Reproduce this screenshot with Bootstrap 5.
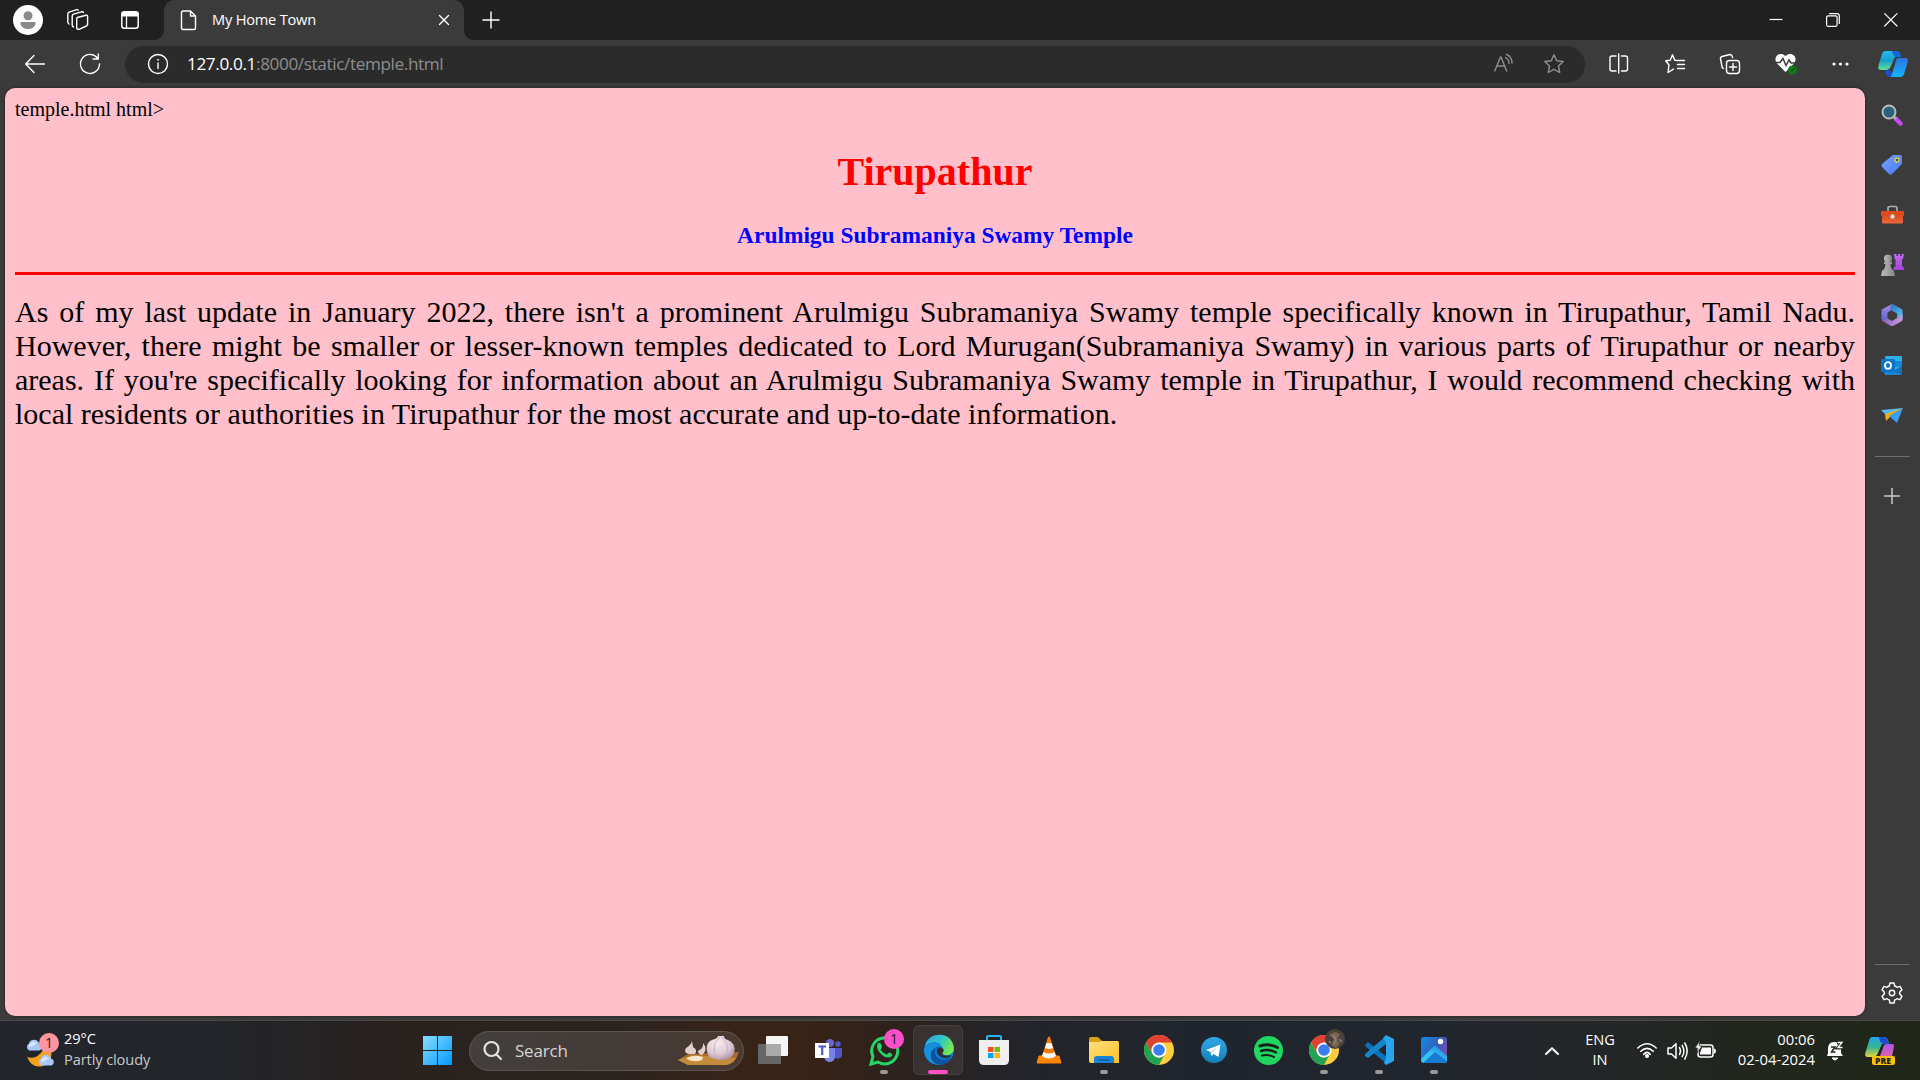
<!DOCTYPE html>
<html lang="en">
<head>
<meta charset="utf-8">
<meta name="viewport" content="width=device-width, initial-scale=1">
<title>My Home Town</title>
<link href="https://cdn.jsdelivr.net/npm/bootstrap@5.3.0/dist/css/bootstrap.min.css" rel="stylesheet">
<style>
html,body{height:100%}
body{width:1920px;height:1080px;overflow:hidden;background:#3b3b3b;color:#fff;font-family:"Open Sans","Noto Sans",sans-serif;font-size:14.6px;line-height:20px}
svg{display:block;flex:none;overflow:visible}
.ln{fill:none;stroke:#fff;stroke-width:1.4;stroke-linecap:round;stroke-linejoin:round}
.dim{stroke:#8f8f8f}
.slot{flex:none;display:flex;align-items:center;justify-content:center}
.tabstrip{height:40px;background:#202020}
.tab-active{width:300px;height:40px;background:#3b3b3b;border-radius:10px 10px 0 0;position:relative;padding:0 10px 0 14px}
.tab-active::before,.tab-active::after{content:"";position:absolute;bottom:0;width:10px;height:10px}
.tab-active::before{left:-10px;background:radial-gradient(circle at 0 0,transparent 9.5px,#3b3b3b 10.5px)}
.tab-active::after{right:-10px;background:radial-gradient(circle at 100% 0,transparent 9.5px,#3b3b3b 10.5px)}
.tab-name{margin-left:14px;padding-bottom:2px;letter-spacing:-.2px}
.toolbar{height:48px}
.address{width:1460px;height:37px;background:#2b2b2b;border-radius:19px;margin-left:15px;margin-right:6.5px;font-size:17.2px;letter-spacing:-.39px;color:#8e8e8e}
.address b{font-weight:400;color:#fff}
.viewer{height:932px}
.doc{width:1860px;height:928px;margin-left:5px;background:#ffc0cb;border-radius:10px;padding:10px;color:#000;font-family:"Liberation Serif",serif;font-size:20px;line-height:23px;box-shadow:0 0 3px #1d1d1d}
.doc h1{font-size:40px;font-weight:700;line-height:46px;margin:28px 0 0;color:red}
.doc h3{font-size:23.4px;font-weight:700;line-height:27px;margin:27px 0 0;color:blue}
.doc hr{height:3px;border:0;background:red;opacity:1;margin:23px 0 0}
.doc p{font-size:30px;line-height:34px;text-align:justify;margin:20px 0 0}
.side{width:54px;padding-top:2px}
.side .slot{height:50px}
.side-rule{width:35px;height:1px;background:#707070;margin:0 auto}
.taskbar{height:60px;border-top:1px solid #4b4946;background:linear-gradient(90deg,#22252b 0,#22252a 210px,#29221f 400px,#2b231f 620px,#382318 730px,#382316 810px,#2c221e 900px,#24242a 1000px,#20252d 1200px,#20252e 1400px,#24262b 1530px,#22261f 1740px,#20271a 1880px)}
.tray-text{padding-bottom:3px}
.finder{width:275px;height:40px;border:1px solid #5c5653;border-radius:20px;background:linear-gradient(90deg,#433f3d,#443a36 70%,#4c3a30);font-size:17px;color:#d6d3d1;margin-left:9px;margin-right:2px;padding:0 3px 0 13px}
.app{width:55px;height:59px;position:relative;padding-bottom:1px}
.app.on::after{content:"";position:absolute;left:24px;top:49px;width:8px;height:4px;border-radius:2px;background:#9b9896}
.app.focus-app::before{content:"";position:absolute;left:2px;top:4px;width:50px;height:50px;border:1px solid #46403f;border-radius:6px;background:#393232}
.app.focus-app::after{left:17px;width:20px;background:#ff4fc8}
.app svg{position:relative}
.count{position:absolute;width:20px;height:20px;border-radius:50%;background:#ff4fc8;color:#1c1c1c;font-size:14px;line-height:20px;text-align:center}
</style>
<script src="https://cdn.jsdelivr.net/npm/bootstrap@5.3.0/dist/js/bootstrap.bundle.min.js"></script>
</head>
<body>
<svg width="0" height="0" class="position-absolute">
<defs>
<linearGradient id="gCy" x1="0" y1="0" x2="0" y2="1"><stop offset="0" stop-color="#28b8ee"/><stop offset=".5" stop-color="#189fc8"/><stop offset="1" stop-color="#62df9a"/></linearGradient>
<linearGradient id="gBl" x1="0" y1="0" x2="0" y2="1"><stop offset="0" stop-color="#2c74e5"/><stop offset="1" stop-color="#18b4fb"/></linearGradient>
<linearGradient id="gPre" x1="0" y1="0" x2="0" y2="1"><stop offset="0" stop-color="#22a7ee"/><stop offset=".5" stop-color="#32b493"/><stop offset="1" stop-color="#ecd43c"/></linearGradient>
<linearGradient id="gPk" x1="0" y1="0" x2="0" y2="1"><stop offset="0" stop-color="#a855ef"/><stop offset="1" stop-color="#f46a8e"/></linearGradient>
<linearGradient id="gWin" gradientUnits="userSpaceOnUse" x1="0" y1="0" x2="29" y2="29"><stop offset="0" stop-color="#85dfff"/><stop offset="1" stop-color="#0797fb"/></linearGradient>
<linearGradient id="gTag" x1="0" y1="0" x2="1" y2="1"><stop offset="0" stop-color="#78a5ff"/><stop offset="1" stop-color="#4776f0"/></linearGradient>
<linearGradient id="gBox" x1="0" y1="0" x2="0" y2="1"><stop offset="0" stop-color="#d14a1c"/><stop offset="1" stop-color="#f0673f"/></linearGradient>
<linearGradient id="gEdge" x1="0" y1="0" x2="1" y2=".4"><stop offset="0" stop-color="#26a8e5"/><stop offset=".6" stop-color="#35c6c4"/><stop offset="1" stop-color="#72ea52"/></linearGradient>
<linearGradient id="gFold" x1="0" y1="0" x2="1" y2="1"><stop offset="0" stop-color="#ffe082"/><stop offset="1" stop-color="#fcc123"/></linearGradient>
<linearGradient id="gTel" x1="0" y1="0" x2="0" y2="1"><stop offset="0" stop-color="#31a9e4"/><stop offset="1" stop-color="#127fb9"/></linearGradient>
<linearGradient id="gPho" x1="0" y1="0" x2="1" y2=".5"><stop offset="0" stop-color="#168ce0"/><stop offset=".6" stop-color="#315fc0"/><stop offset="1" stop-color="#7c4bb2"/></linearGradient>
<linearGradient id="gMt" x1="0" y1="1" x2="1" y2="0"><stop offset="0" stop-color="#36c9f6"/><stop offset=".5" stop-color="#35bff2"/><stop offset="1" stop-color="#1679d0"/></linearGradient>
<linearGradient id="gChs" x1="0" y1="0" x2="0" y2="1"><stop offset="0" stop-color="#c46bf5"/><stop offset="1" stop-color="#a541dd"/></linearGradient>
<linearGradient id="gGry" x1="0" y1="0" x2="1" y2="0"><stop offset="0" stop-color="#bdbdbd"/><stop offset="1" stop-color="#858585"/></linearGradient>
<linearGradient id="gM1" x1="0" y1="0" x2="0" y2="1"><stop offset="0" stop-color="#a98be0"/><stop offset="1" stop-color="#5b62d2"/></linearGradient>
<linearGradient id="gM2" x1="0" y1="0" x2="1" y2="1"><stop offset="0" stop-color="#2d6fc4"/><stop offset="1" stop-color="#5cc8f5"/></linearGradient>
<linearGradient id="gM3" x1="0" y1="0" x2="1" y2="0"><stop offset="0" stop-color="#8a63bd"/><stop offset="1" stop-color="#c79be0"/></linearGradient>
<radialGradient id="gGar" cx=".4" cy=".3" r=".8"><stop offset="0" stop-color="#f8edf0"/><stop offset=".6" stop-color="#dcc6d2"/><stop offset="1" stop-color="#a3839a"/></radialGradient>
<symbol id="chrome" viewBox="0 0 30 30"><circle cx="15" cy="15" r="15" fill="#ffcd3c"/><path d="M2 7.5A15 15 0 0 1 28 7.5H15L8.5 11.3Z" fill="#df4133"/><path d="M2 7.500 8.500 18.700A7.500 7.500 0 0 1 15 7.500Z" fill="#df4133"/><path d="M2 7.500 8.500 18.700 10.500 21A7 7 0 0 0 21 18.800L15 30A15 15 0 0 1 2 7.500Z" fill="#22a354"/><circle cx="15" cy="15" r="7.500" fill="#fff"/><circle cx="15" cy="15" r="5.800" fill="#397df0"/></symbol>
<symbol id="cloud" viewBox="0 0 18 11"><path d="M4 11A4 4 0 0 1 4 4 5.200 5.200 0 0 1 14 4 3.600 3.600 0 0 1 14 11Z" fill="#a9c8f7"/><path d="M4.500 8A3 3 0 0 1 6 3.500 4 4 0 0 1 12 4" fill="#d8e6ff"/></symbol>
</defs>
</svg>

<header>
  <div class="tabstrip d-flex align-items-center">
    <div class="slot" style="width:56px"><svg width="30" height="30"><circle cx="15" cy="15" r="15" fill="#fff"/><circle cx="15" cy="10.700" r="4.500" fill="#8a8a8a"/><path d="M8 17.500H22V19Q21 23.500 15 23.500T8 19Z" fill="#8a8a8a" stroke="#8a8a8a"/></svg></div>
    <div class="slot" style="width:43px"><svg class="ln" width="22" height="22" viewBox="0 0 22 22"><path d="M10.300 8.500 19 6.200Q20.600 6 20.600 7.400V15.500L19.500 17 12 20.300Q9.700 20.700 9.700 19V9.800Z"/><path d="M6.500 18Q5.200 17.500 5.200 16V7Q5.200 5.700 6.500 5.200L14.500 2.800Q16 2.500 16.400 3.600M2 15Q.8 14 .8 13V5Q.8 3.700 2 3.200L9 .8Q10.500.4 11.200 1"/></svg></div>
    <div class="slot" style="width:62px"><svg width="18" height="18"><rect x=".8" y=".8" width="16.400" height="16.400" rx="2.500" fill="none" stroke="#fff" stroke-width="1.500"/><path d="M.8 5.500V3Q.8.800 3 .8H15Q17.200.8 17.200 3V5.500Z" fill="#fff"/><path d="M5.500 5V17" stroke="#fff" stroke-width="1.300"/></svg></div>
    <div class="tab-active d-flex align-items-center" style="margin-left:3px">
      <svg class="ln" width="18" height="21" viewBox="0 0 18 21" style="margin-left:2px"><path d="M3 1H10.500L15.500 6V18Q15.500 19.500 14 19.500H3Q1.500 19.500 1.500 18V2.500Q1.500 1 3 1ZM10.500 1V6H15.500"/></svg>
      <span class="tab-name me-auto text-nowrap">My Home Town</span>
      <svg class="ln" width="20" height="20"><path d="M5.500 5.500 14.500 14.500M14.500 5.500 5.500 14.500"/></svg>
    </div>
    <div class="slot" style="width:53px"><svg class="ln" width="18" height="18"><path d="M9 1V17M1 9H17"/></svg></div>
    <div class="slot ms-auto" style="width:57px"><svg width="14" height="14"><path d="M.5 6.500H13.500" stroke="#fff" stroke-width="1.200"/></svg></div>
    <div class="slot" style="width:58px"><svg class="ln" width="14" height="14" style="stroke-width:1.200"><rect x=".6" y="2.800" width="10.500" height="10.500" rx="1.500"/><path d="M3.500.600H11Q13.300.600 13.300 3V10.500"/></svg></div>
    <div class="slot" style="width:58px"><svg class="ln" width="14" height="14" style="stroke-width:1.200"><path d="M.7.700 13 13M13 .7.700 13"/></svg></div>
  </div>

  <div class="toolbar d-flex align-items-center">
    <div class="slot" style="width:70px"><svg class="ln" width="20" height="18"><path d="M19.500 9H.700M9 .5.700 9 9 17.500"/></svg></div>
    <div class="slot" style="width:40px"><svg class="ln" width="22" height="22"><path d="M18.800 5.500A9.500 9.500 0 1 0 20.500 11M19.300 1V6H14"/></svg></div>
    <div class="address d-flex align-items-center">
      <div class="slot" style="width:62px"><svg class="ln" width="22" height="22" style="margin-left:3px"><circle cx="11" cy="11" r="9.500"/><path d="M11 10V15.500"/><circle cx="11" cy="6.800" r=".5" fill="#fff" stroke-width=".8"/></svg></div>
      <span class="me-auto text-nowrap"><b>127.0.0.1</b>:8000/static/temple.html</span>
      <div class="slot" style="width:50px"><svg class="ln dim" width="20" height="20"><path d="M.8 17 6.500 3H7L12.700 17M3 12H10.500M11.500 3.500Q15 5.500 15 9.500M12.500.500Q18 3 18 9"/></svg></div>
      <div class="slot" style="width:50px"><svg class="ln dim" width="20" height="20" viewBox="0 0 20 20"><path d="M10 .8 12.800 6.700 19.200 7.500 14.500 12 15.700 18.500 10 15.300 4.300 18.500 5.500 12 .8 7.500 7.200 6.700Z"/></svg></div>
      <div style="width:6px"></div>
    </div>
    <div class="slot" style="width:55.500px"><svg class="ln" width="20" height="20"><path d="M7 2H3Q1 2 1 4V15Q1 17 3 17H7M12.500 2H16.500Q18.500 2 18.500 4V15Q18.500 17 16.500 17H12.500M9.700 0V19"/></svg></div>
    <div class="slot" style="width:55.500px"><svg class="ln" width="20" height="20"><path d="M12 6.500 9.800 6.200 7.500.800 5.200 6.200.700 6.800 4 11 3 18.500 8.500 15.200M12.500 6.500H19.500M12.500 10.500H19.500M12.500 14.500H19.500"/></svg></div>
    <div class="slot" style="width:55.500px"><svg class="ln" width="20" height="20"><rect x="6.500" y="6.500" width="13" height="13" rx="3"/><path d="M13 9.500V16.500M9.500 13H16.500M3.500 14.500 2.300 13.800.500 5Q.200 3 2 2.500L10 .500Q11.800.500 12.300 2.500L12.700 3.500"/></svg></div>
    <div class="slot" style="width:55.500px"><svg width="22" height="22"><path d="M10.500 19 2 10.500C-3 4 5-2.500 10.500 3 16-2.500 24 4 19 10.500Z" fill="#fff"/><path d="M0 9.500H5L8 5.500 11 12.500 14 7 16 10H21" fill="none" stroke="#3b3b3b" stroke-width="1.500"/><circle cx="17.500" cy="17" r="4.500" fill="#10781c"/><path d="M16 17 17 18 19.500 15.500" fill="none" stroke="#07440d"/></svg></div>
    <div class="slot" style="width:55.500px"><svg width="18" height="6" fill="#fff"><circle cx="2" cy="3" r="1.600"/><circle cx="8.500" cy="3" r="1.600"/><circle cx="15" cy="3" r="1.600"/></svg></div>
    <div class="slot" style="width:48px"><svg width="30" height="28" viewBox="0 0 30 28"><path d="M7 1H18Q22 1 23 7H17L12 18Q10 20 8 20H3Q-1 20 .6 15L4 4Q5 1 7 1Z" fill="url(#gCy)"/><path d="M14 1H19Q22 1 23 7H18Q15 6 14 1Z" fill="#1167d5"/><path d="M7 20H12L15 27H12Q8 27 7 20Z" fill="#1d4fd6"/><path d="M19 8H27Q31 8 29.500 13L26 24Q25 27 22 27H13L18 11Q18 8 21 8Z" fill="url(#gBl)"/></svg></div>
  </div>
</header>

<div class="viewer d-flex">
  <main class="doc">
    <div>temple.html html&gt;</div>
    <h1 class="text-center">Tirupathur</h1>
    <h3 class="text-center">Arulmigu Subramaniya Swamy Temple</h3>
    <hr>
    <p>As of my last update in January 2022, there isn't a prominent Arulmigu Subramaniya Swamy temple specifically known in Tirupathur, Tamil Nadu. However, there might be smaller or lesser-known temples dedicated to Lord Murugan(Subramaniya Swamy) in various parts of Tirupathur or nearby areas. If you're specifically looking for information about an Arulmigu Subramaniya Swamy temple in Tirupathur, I would recommend checking with local residents or authorities in Tirupathur for the most accurate and up-to-date information.</p>
  </main>
  <aside class="side d-flex flex-column">
    <div class="slot"><svg width="22" height="22"><path d="M15 15 19.500 19.500" stroke="#ca48f3" stroke-width="4.500" stroke-linecap="round"/><path d="M12.500 12.500 15 15" stroke="#aaa" stroke-width="3"/><circle cx="8" cy="8" r="6.500" fill="#28627f" stroke="#b9b9b9" stroke-width="2"/></svg></div>
    <div class="slot"><svg width="22" height="22"><path d="M12 1H19Q21 1 21 3V10L11 20Q9.500 21 8 20L1 13Q0 11.500 1 10Z" fill="url(#gTag)"/><circle cx="16" cy="6" r="2" fill="#294ca4" stroke="#ecd12a" stroke-width="1.300"/></svg></div>
    <div class="slot"><svg width="23" height="20"><path d="M7 6V3Q7 1.500 9 1.500H14Q16 1.500 16 3V6" fill="none" stroke="#aaa" stroke-width="1.700"/><rect x="1" y="9" width="21" height="9.500" rx="1.500" fill="url(#gBox)"/><rect y="6" width="23" height="5" rx="1" fill="#dc4b1c"/><circle cx="11.500" cy="11.500" r="2.200" fill="#ddd"/></svg></div>
    <div class="slot"><svg width="23" height="24"><path d="M13 1H15.500V3H17V1H19V3H20.500V1H23L22 6H21V13L23 15V17H12.500V15L14.500 13V6H13.500Z" fill="url(#gChs)"/><circle cx="7" cy="5.500" r="4" fill="url(#gGry)"/><path d="M3 9H11V11H9.500Q9.500 16 13 18L14 23H0L1 18Q4.500 16 4.500 11H3Z" fill="url(#gGry)"/></svg></div>
    <div class="slot"><svg width="22" height="22"><path d="M11 0 1.500 5Q.5 5.500.5 7V15L3 17.500Q6 18 6.500 15V8.500L12 5Z" fill="url(#gM1)"/><path d="M11 0Q12 0 13 .8L20.500 5Q21.500 5.600 21.500 7V15Q20 17 16 14V9.500L9.500 6Q8.500 2 11 0Z" fill="url(#gM2)"/><path d="M.5 15Q3 18 6.500 14.500L11 17 16 14 21.500 10.500V15.500Q21.500 16.500 20 17.400L13 21.500Q11 22.500 9 21.500L1.500 17Q.5 16 .5 15Z" fill="url(#gM3)"/></svg></div>
    <div class="slot"><svg width="22" height="21"><rect x="4" y="1" width="17" height="17" rx="1" fill="#2ab2e8"/><path d="M12 6H21V12H12Z" fill="#1688d7"/><path d="M4 11 13 16 21 10V19Q21 20 19 20H5Q3 20 3 18Z" fill="#1987cf"/><path d="M13 16 21 11V20Z" fill="#1670b7"/><rect x="0" y="4" width="14" height="13" rx="1" fill="#0874cb"/><ellipse cx="7" cy="10.500" rx="3" ry="3.300" fill="none" stroke="#fff" stroke-width="1.800"/></svg></div>
    <div class="slot"><svg width="23" height="18"><path d="M22 2 0 4 5 9Z" fill="#54bbf3"/><path d="M22 2 4 8 5 15 9 11Z" fill="#efad16"/><path d="M22 2 8 10 16 17Z" fill="#389df1"/></svg></div>
    <div class="side-rule" style="margin-top:16px"></div>
    <div class="slot" style="margin-top:14px"><svg width="16" height="16" stroke="#ccc" stroke-width="1.500"><path d="M8 0V16M0 8H16"/></svg></div>
    <div class="side-rule mt-auto"></div>
    <div class="slot" style="height:55px"><svg class="ln" width="22" height="22" viewBox="0 0 22 22"><path d="M9 1H13L13.700 4Q15 4.500 16 5.300L19 4.300 21 7.800 18.700 10V12L21 14.200 19 17.700 16 16.700Q15 17.500 13.700 18L13 21H9L8.300 18Q7 17.500 6 16.700L3 17.700 1 14.200 3.300 12V10L1 7.800 3 4.300 6 5.300Q7 4.500 8.300 4Z"/><circle cx="11" cy="11" r="2.700"/></svg></div>
  </aside>
</div>

<footer class="taskbar d-flex align-items-center">
  <div class="d-flex align-items-center" style="width:410px;padding-left:24px">
    <div class="position-relative" style="width:40px;height:36px"><svg width="34" height="36"><path d="M26 12Q31 28 19 33 8 36 3 24 13 27 19 17Z" fill="#f5a01f"/><use href="#cloud" x="1" y="6" width="18" height="12"/><use href="#cloud" x="13" y="21" width="18" height="12"/></svg><span class="count" style="left:15px;top:0;background:#ff94a1">1</span></div>
    <div class="tray-text"><div style="font-size:14.500px">29°C</div><div class="text-nowrap" style="color:#c9c9ca;letter-spacing:-.1px">Partly cloudy</div></div>
  </div>
  <div class="slot" style="width:54px;margin-left:-4px"><svg style="margin-left:9px" width="29" height="29" fill="url(#gWin)"><rect width="14" height="14"/><rect x="15" width="14" height="14"/><rect y="15" width="14" height="14"/><rect x="15" y="15" width="14" height="14"/></svg></div>
  <div class="finder d-flex align-items-center"><svg width="20" height="20" fill="none" stroke="#e5e3e2" stroke-width="2.200" stroke-linecap="round"><circle cx="8.500" cy="8" r="7"/><path d="M13.500 13.500 18 18"/></svg><span class="me-auto" style="margin-left:12px;letter-spacing:-.2px">Search</span>
    <svg width="62" height="31"><path d="M0 25 10 19 61 17 59 22Q55 30 47 30H10Z" fill="#a66c2b"/><path d="M0 25 14 20 58 23Q53 30 47 30H10Z" fill="#c38b3c"/><path d="M14 6Q13 10 8 13 5 18 11 19H17Q20 15 15 12ZM25 8Q26 13 20 16 20 19 24 20 29 16 27 11Z" fill="#e4d0cf"/><path d="M9 23Q16 19 25 22L24 25Q16 28 9 24Z" fill="#f5e6c9"/><path d="M40 1H46Q46 4 50 5 59 9 56 18 54 25 43 25 31 25 29 17 27 6 37 4 40 3 40 1Z" fill="url(#gGar)"/><path d="M42 2Q33 10 38 22M44 2Q53 11 47 22" stroke="#c2a8ba" stroke-width=".8" fill="none"/></svg></div>
  <div class="slot app"><svg width="31" height="28"><rect x="8" width="22" height="20" rx="1" fill="#f5f5f5"/><rect x="0" y="8" width="23" height="20" rx="1" fill="#666"/><path d="M8 8H23V20H8Z" fill="#aaa"/></svg></div>
  <div class="slot app"><svg width="27" height="25"><circle cx="15" cy="5" r="4" fill="#6468d2"/><circle cx="23" cy="6" r="2.800" fill="#5059c9"/><path d="M19 10H27V18Q25 22 20 20Z" fill="#4e56c8"/><path d="M9 10H20V18Q20 24 14 24 9 23 9 18Z" fill="#7b83eb"/><rect y="5" width="14" height="15" fill="#fff"/><path d="M3.500 8.500H11M7.200 8V17" stroke="#5059c9" stroke-width="2.200"/></svg></div>
  <div class="slot app on"><svg width="30" height="31"><path d="M2 29 4 21.500A13 13 0 1 1 9 27Z" fill="none" stroke="#25d366" stroke-width="3"/><path d="M9 8Q12 7 13 12L11.500 14.500Q14 18.500 18 19.500L20 17.500Q24 18.500 23 21 18 25 12 19 6 13 9 8Z" fill="#25d366"/></svg><span class="count" style="left:28px;top:8px">1</span></div>
  <div class="slot app on focus-app"><svg width="30" height="30"><circle cx="15" cy="15" r="15" fill="#0878cf"/><path d="M1 11C4-3 25-4 29 9 32 17 27 21 21 20 17 20 19 16 19 14 16 5 6 6 1 11Z" fill="url(#gEdge)"/><path d="M12 12C9 20 15 27 26 24 18 34 1 31 0 15 2 5 16 6 19 14 16 10 12 11 12 12Z" fill="#168fdd"/><path d="M12 12C8 21 16 28 27 23 22 31 12 32 8 25 5 19 8 13 14 12Z" fill="#0c529f"/><path d="M13 14C12 20 18 25 26 22L27 20Q21 22 18 19L20 15Q16 10 13 14Z" fill="#332d30"/></svg></div>
  <div class="slot app"><svg width="30" height="30"><path d="M8 6V2Q8 1 9 1H21Q22 1 22 2V6" fill="none" stroke="#26b3ee" stroke-width="2"/><path d="M0 5H30V25Q30 30 25 30H5Q0 30 0 25Z" fill="#efefef"/><path d="M9 12H14.500V17H9Z" fill="#f25022"/><path d="M15.500 12H21V17H15.500Z" fill="#7fba00"/><path d="M9 18H14.500V23H9Z" fill="#00a4ef"/><path d="M15.500 18H21V23H15.500Z" fill="#ffb900"/></svg></div>
  <div class="slot app"><svg width="26" height="28"><path d="M3 20H23L25 27H1Z" fill="#ff8500" stroke="#ff8500"/><path d="M12 1Q13 0 14 1L20 20Q13 25 6 20Z" fill="#f27b08"/><path d="M10.500 7H15.500L17 12Q13 14 9 12ZM7.500 16Q13 19 18.500 16L20 20Q13 25 6 20Z" fill="#f7f7f7"/></svg></div>
  <div class="slot app on"><svg width="30" height="27"><path d="M0 6V2Q0 0 2 0H9L13 4H28Q30 4 30 7Z" fill="#dba010"/><path d="M0 5H10L13 4H28Q30 4 30 6V26H2Q0 26 0 24Z" fill="url(#gFold)"/><path d="M5 26V22Q5 19 8 19H22Q25 19 25 22V26Z" fill="#1685d8"/><path d="M9 23H21" stroke="#0961a8" stroke-width="1.500"/></svg></div>
  <div class="slot app"><svg width="30" height="30"><use href="#chrome" width="30" height="30"/></svg></div>
  <div class="slot app"><svg width="26" height="26"><circle cx="13" cy="13" r="13" fill="url(#gTel)"/><path d="M5 13 19.500 7.500 17.500 20 12.500 17 10.500 19 9.500 15Z" fill="#fff"/><path d="M9.500 15 17 9.500 11 16Z" fill="#b9d8ea"/></svg></div>
  <div class="slot app"><svg width="29" height="29"><circle cx="14.500" cy="14.500" r="14.500" fill="#1ed760"/><g fill="none" stroke="#182019" stroke-linecap="round"><path d="M6 10Q15 7 23.500 11.500" stroke-width="3"/><path d="M7 15Q15 12.500 22 16.500" stroke-width="2.500"/><path d="M8 19.500Q14 18 20 21" stroke-width="2"/></g></svg></div>
  <div class="slot app on"><svg width="30" height="30"><use href="#chrome" width="30" height="30"/><circle cx="26" cy="4" r="10" fill="#4a4138"/><path d="M20 0 25 4 22 10 27 13 31 8 28 5 31-1 26-3Z" fill="#79644c"/><path d="M24 0 27 5 25 9M30 4 33 7M20 6 22 8" stroke="#82858a" fill="none" stroke-width="1.500"/></svg></div>
  <div class="slot app on"><svg width="30" height="30"><path d="M2 9 4 7 23 22V29L1 11Z" fill="#0873b9"/><path d="M1 19 22 1V9L4 23 1 21Z" fill="#1685ce"/><path d="M22 0 30 4V26L22 30 20 28 22 23V7L19 3Z" fill="#28a5ed"/></svg></div>
  <div class="slot app on"><svg width="26" height="26"><rect width="26" height="26" rx="3" fill="url(#gPho)"/><path d="M0 22 12 10Q14 8 16 10L26 19V23Q26 26 23 26H3Q0 26 0 22Z" fill="url(#gMt)"/><path d="M2 26 14 15 26 24Q25 26 23 26Z" fill="#177bd2"/><circle cx="19.500" cy="4.500" r="2.700" fill="#fff"/></svg></div>
  <div class="slot ms-auto" style="width:46px"><svg class="ln" width="14" height="8" style="stroke-width:2"><path d="M1 7 7 1.300 13 7"/></svg></div>
  <div class="text-center tray-text" style="width:50px">ENG<br>IN</div>
  <div class="slot gap-2" style="width:98px;margin-left:3px">
    <svg class="ln" width="20" height="16" style="stroke-width:1.600"><path d="M.8 5Q10-3.500 19.200 5M3.800 8.300Q10 2.300 16.200 8.300M6.800 11.300Q10 7.500 13.200 11.300"/><circle cx="10" cy="13" r="1.300" fill="#fff"/></svg>
    <svg class="ln" width="21" height="18" style="margin-left:2px;stroke-width:1.500"><path d="M1 6H4.500L9 1.800V16.200L4.500 12H1ZM12.500 5.500Q14.500 9 12.500 12.500M15.200 3.300Q18.600 9 15.200 14.700M17.800 1Q22.500 9 17.800 17"/></svg>
    <svg width="21" height="17"><rect x="2" y="3" width="15" height="12" rx="2.500" fill="none" stroke="#fff" stroke-width="1.500"/><path d="M18 6.500Q20 6.500 20 9T18 11.500Z" fill="#fff"/><path d="M6 5.500H15V12.500H4V11Z" fill="#fff"/><path d="M4-1.500-1 6H2L1 11 6 4H3Z" fill="#fff" stroke="#25261f" stroke-width=".7"/></svg>
  </div>
  <div class="text-end text-nowrap tray-text" style="width:89px;font-size:14.800px">00:06<br>02-04-2024</div>
  <div class="slot" style="width:40px"><svg width="18" height="20"><path d="M1 15 2 12V8Q2 1 8 1 15 1 15 8V12L17 15Z" fill="#fff"/><path d="M6 17H12Q9 21 6 17Z" fill="#fff" stroke="#fff"/><path d="M5 6H9L5.500 11H9.500" fill="none" stroke="#24281f" stroke-width="1.500"/><path d="M11 2H16L11.500 7H16.500" fill="none" stroke="#24281f" stroke-width="3"/><path d="M11.500 1.500H16L12 6.500H16.500" fill="none" stroke="#fff" stroke-width="1.300"/></svg></div>
  <div class="slot" style="width:49px;margin-right:16px"><div class="position-relative"><svg width="30" height="28" viewBox="0 0 30 28"><path d="M7 0H19Q23 0 24 7H17L12 18Q10 20 8 20H3Q-1 20 .6 15L4 4Q5 0 7 0Z" fill="url(#gPre)"/><path d="M14 0H19Q22 0 24 7H18Q15 6 14 0Z" fill="#214cc9"/><path d="M19 7H27Q30 7 28.500 12L26 24H13L18 11Q18 8 21 7Z" fill="url(#gPk)"/></svg><span style="position:absolute;left:7px;top:19px;width:23px;height:9px;border-radius:2px;background:#fcc10c;color:#222;font-size:8.500px;line-height:9px;font-weight:800;text-align:center">PRE</span></div></div>
</footer>
</body>
</html>
